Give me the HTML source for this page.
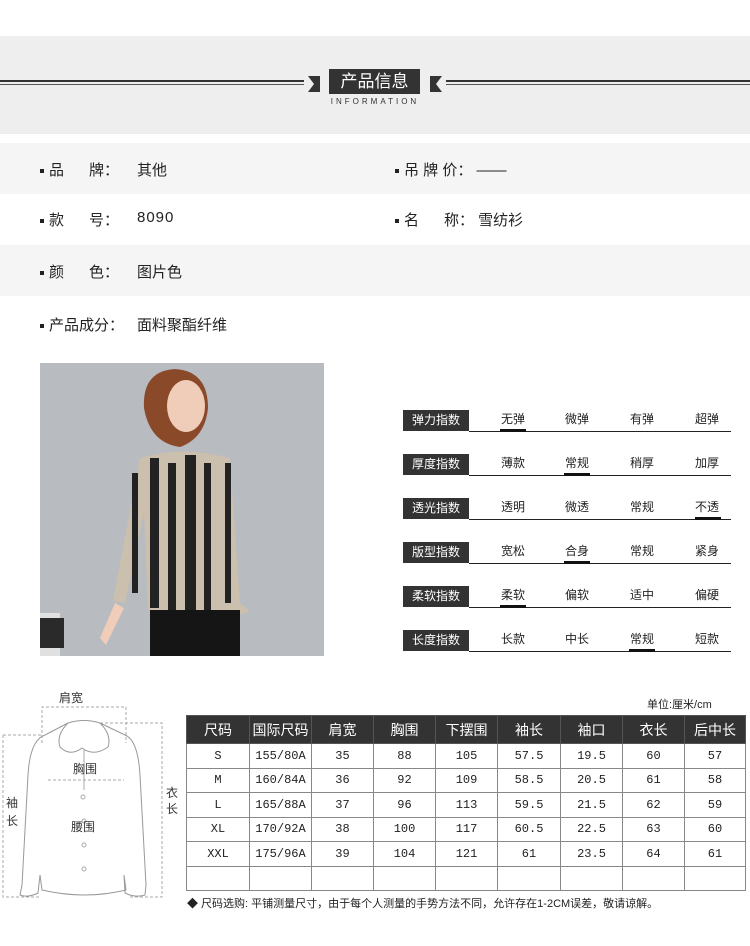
<!DOCTYPE html>
<html><head><meta charset="utf-8"><style>
*{margin:0;padding:0;box-sizing:border-box}
body{width:750px;height:946px;background:#fff;position:relative;overflow:hidden;font-family:"Liberation Sans","Noto Sans CJK SC",sans-serif;color:#222}
.a{position:absolute}
.hdr{left:0;top:36px;width:750px;height:98px;background:#eeeeee}
.row{left:0;width:750px;height:51px}
.t{font-size:15px;white-space:nowrap}
.b{width:4px;height:4px;background:#222;display:inline-block;margin-right:5px;vertical-align:middle}
.lab{left:403px;width:66px;height:21px;background:#333;color:#fff;font-size:12px;text-align:center;line-height:21px}
.ln{left:469px;width:262px;height:1px;background:#222}
.op{font-size:12px;width:40px;text-align:center}
.sel{height:3px;width:26px;background:#111}
table{position:absolute;left:186px;top:715px;border-collapse:collapse;table-layout:fixed}
td{border:1px solid #888;text-align:center;height:24.5px;padding:0;font-family:"Liberation Mono","Noto Sans CJK SC",monospace;font-size:12px}
th{background:#333;color:#fff;font-weight:normal;height:28px;padding:0;font-size:14px;border:1px solid #555}
</style></head><body>
<div class="a hdr"></div>
<div class="a" style="left:0;top:80px;width:304px;height:2px;background:#333"></div>
<div class="a" style="left:0;top:84px;width:304px;height:1px;background:#555"></div>
<div class="a" style="left:446px;top:80px;width:304px;height:2px;background:#333"></div>
<div class="a" style="left:446px;top:84px;width:304px;height:1px;background:#555"></div>
<svg class="a" style="left:308px;top:72px" width="134" height="22"><polygon points="0,4 12,4 12,20 0,20 6,12" fill="#333"/><polygon points="134,4 122,4 122,20 134,20 128,12" fill="#333"/></svg>
<div class="a" style="left:329px;top:69px;width:91px;height:25px;background:#333;color:#fff;font-size:17px;text-align:center;line-height:25px">产品信息</div>
<div class="a" style="left:300px;top:97px;width:150px;text-align:center;font-size:8px;letter-spacing:3px;color:#333">INFORMATION</div>

<div class="a row" style="top:143px;background:#f5f5f5"></div>
<div class="a row" style="top:245px;background:#f5f5f5"></div>
<div class="a t" style="left:40px;top:159px"><span class="b"></span>品&nbsp;&nbsp;&nbsp;&nbsp;&nbsp;&nbsp;牌：</div>
<div class="a t" style="left:137px;top:159px">其他</div>
<div class="a t" style="left:395px;top:159px"><span class="b"></span>吊 牌 价：&nbsp;——</div>
<div class="a t" style="left:40px;top:209px"><span class="b"></span>款&nbsp;&nbsp;&nbsp;&nbsp;&nbsp;&nbsp;号：</div>
<div class="a t" style="left:137px;top:209px;letter-spacing:1px">8090</div>
<div class="a t" style="left:395px;top:209px"><span class="b"></span>名&nbsp;&nbsp;&nbsp;&nbsp;&nbsp;&nbsp;称：&nbsp;雪纺衫</div>
<div class="a t" style="left:40px;top:261px"><span class="b"></span>颜&nbsp;&nbsp;&nbsp;&nbsp;&nbsp;&nbsp;色：</div>
<div class="a t" style="left:137px;top:261px">图片色</div>
<div class="a t" style="left:40px;top:314px"><span class="b"></span>产品成分：</div>
<div class="a t" style="left:137px;top:314px">面料聚酯纤维</div>

<svg class="a" style="left:40px;top:363px" width="284" height="293">
<rect width="284" height="293" fill="#b8bbc0"/>
<rect x="0" y="250" width="20" height="43" fill="#e0e0e0"/>
<rect x="0" y="255" width="24" height="30" fill="#2a2a2a"/>
<path d="M104,45 Q102,8 135,6 Q168,8 168,45 Q165,75 140,84 Q110,80 104,45Z" fill="#8a4a2a"/>
<ellipse cx="146" cy="43" rx="19" ry="26" fill="#efcdb8"/>
<path d="M100,95 Q140,82 190,95 L200,240 L210,248 L196,253 L192,130 L196,247 L108,247 L104,150 L85,240 L73,238 Z" fill="#cbbfae"/>
<g fill="#222"><rect x="110" y="95" width="9" height="150"/><rect x="128" y="100" width="8" height="147"/><rect x="145" y="92" width="11" height="155"/><rect x="164" y="100" width="7" height="147"/><rect x="92" y="110" width="6" height="120"/><rect x="185" y="100" width="6" height="140"/></g>
<rect x="110" y="247" width="90" height="46" fill="#151515"/>
<path d="M75,240 L60,275 L66,282 L84,245Z" fill="#efcdb8"/>
</svg>

<div class="a lab" style="top:410px">弹力指数</div><div class="a ln" style="top:431px"></div>
<div class="a lab" style="top:454px">厚度指数</div><div class="a ln" style="top:475px"></div>
<div class="a lab" style="top:498px">透光指数</div><div class="a ln" style="top:519px"></div>
<div class="a lab" style="top:542px">版型指数</div><div class="a ln" style="top:563px"></div>
<div class="a lab" style="top:586px">柔软指数</div><div class="a ln" style="top:607px"></div>
<div class="a lab" style="top:630px">长度指数</div><div class="a ln" style="top:651px"></div>

<div class="a op" style="left:493px;top:410px">无弹</div><div class="a op" style="left:557px;top:410px">微弹</div><div class="a op" style="left:622px;top:410px">有弹</div><div class="a op" style="left:687px;top:410px">超弹</div>
<div class="a op" style="left:493px;top:454px">薄款</div><div class="a op" style="left:557px;top:454px">常规</div><div class="a op" style="left:622px;top:454px">稍厚</div><div class="a op" style="left:687px;top:454px">加厚</div>
<div class="a op" style="left:493px;top:498px">透明</div><div class="a op" style="left:557px;top:498px">微透</div><div class="a op" style="left:622px;top:498px">常规</div><div class="a op" style="left:687px;top:498px">不透</div>
<div class="a op" style="left:493px;top:542px">宽松</div><div class="a op" style="left:557px;top:542px">合身</div><div class="a op" style="left:622px;top:542px">常规</div><div class="a op" style="left:687px;top:542px">紧身</div>
<div class="a op" style="left:493px;top:586px">柔软</div><div class="a op" style="left:557px;top:586px">偏软</div><div class="a op" style="left:622px;top:586px">适中</div><div class="a op" style="left:687px;top:586px">偏硬</div>
<div class="a op" style="left:493px;top:630px">长款</div><div class="a op" style="left:557px;top:630px">中长</div><div class="a op" style="left:622px;top:630px">常规</div><div class="a op" style="left:687px;top:630px">短款</div>
<div class="a sel" style="left:500px;top:429px"></div>
<div class="a sel" style="left:564px;top:473px"></div>
<div class="a sel" style="left:695px;top:517px"></div>
<div class="a sel" style="left:564px;top:561px"></div>
<div class="a sel" style="left:500px;top:605px"></div>
<div class="a sel" style="left:629px;top:649px"></div>

<svg class="a" style="left:0;top:685px" width="190" height="225" fill="none" stroke="#aaa" stroke-width="1">
<text x="59" y="17" font-size="12" fill="#333" stroke="none" font-family="Noto Sans CJK SC">肩宽</text>
<path d="M42,58 V22 H126 V58" stroke-dasharray="3,2"/>
<path d="M3,50 V212 H40 M3,50 H42" stroke-dasharray="3,2"/>
<path d="M100,38 H162 V212 H128" stroke-dasharray="3,2"/>
<path d="M48,95 H124" stroke-dasharray="3,2"/>
<path d="M68,38 Q84,33 100,38 L125,50 Q138,55 140,90 L146,200 L145,210 Q135,213 125,208 L124,190 L126,205 Q85,215 42,205 L40,190 L38,208 Q28,213 20,210 L22,200 L28,90 Q30,55 45,50 Z" stroke="#999"/>
<path d="M68,38 Q56,50 60,62 Q70,72 82,63 Q94,72 108,62 Q112,50 100,38" stroke="#999"/>
<path d="M84,65 V105"/>
<circle cx="83" cy="112" r="2"/><circle cx="84" cy="136" r="2"/><circle cx="84" cy="160" r="2"/><circle cx="84" cy="184" r="2"/>
<g fill="#333" stroke="none" font-size="12" font-family="Noto Sans CJK SC"><text x="73" y="88">胸围</text><text x="71" y="146">腰围</text><text x="6" y="122">袖</text><text x="6" y="140">长</text><text x="166" y="112">衣</text><text x="166" y="128">长</text></g>
</svg>

<div class="a" style="left:647px;top:696px;font-size:11px">单位:厘米/cm</div>
<table style="width:559px">
<colgroup><col style="width:63px"><col style="width:62px"><col style="width:62px"><col style="width:62px"><col style="width:62px"><col style="width:63px"><col style="width:62px"><col style="width:62px"><col style="width:61px"></colgroup>
<tr><th>尺码</th><th>国际尺码</th><th>肩宽</th><th>胸围</th><th>下摆围</th><th>袖长</th><th>袖口</th><th>衣长</th><th>后中长</th></tr>
<tr><td>S</td><td>155/80A</td><td>35</td><td>88</td><td>105</td><td>57.5</td><td>19.5</td><td>60</td><td>57</td></tr>
<tr><td>M</td><td>160/84A</td><td>36</td><td>92</td><td>109</td><td>58.5</td><td>20.5</td><td>61</td><td>58</td></tr>
<tr><td>L</td><td>165/88A</td><td>37</td><td>96</td><td>113</td><td>59.5</td><td>21.5</td><td>62</td><td>59</td></tr>
<tr><td>XL</td><td>170/92A</td><td>38</td><td>100</td><td>117</td><td>60.5</td><td>22.5</td><td>63</td><td>60</td></tr>
<tr><td>XXL</td><td>175/96A</td><td>39</td><td>104</td><td>121</td><td>61</td><td>23.5</td><td>64</td><td>61</td></tr>
<tr><td style="height:22px"></td><td></td><td></td><td></td><td></td><td></td><td></td><td></td><td></td></tr>
</table>
<div class="a" style="left:187px;top:895px;font-size:11px;white-space:nowrap">◆ 尺码选购: 平铺测量尺寸，由于每个人测量的手势方法不同，允许存在1-2CM误差，敬请谅解。</div>
</body></html>
